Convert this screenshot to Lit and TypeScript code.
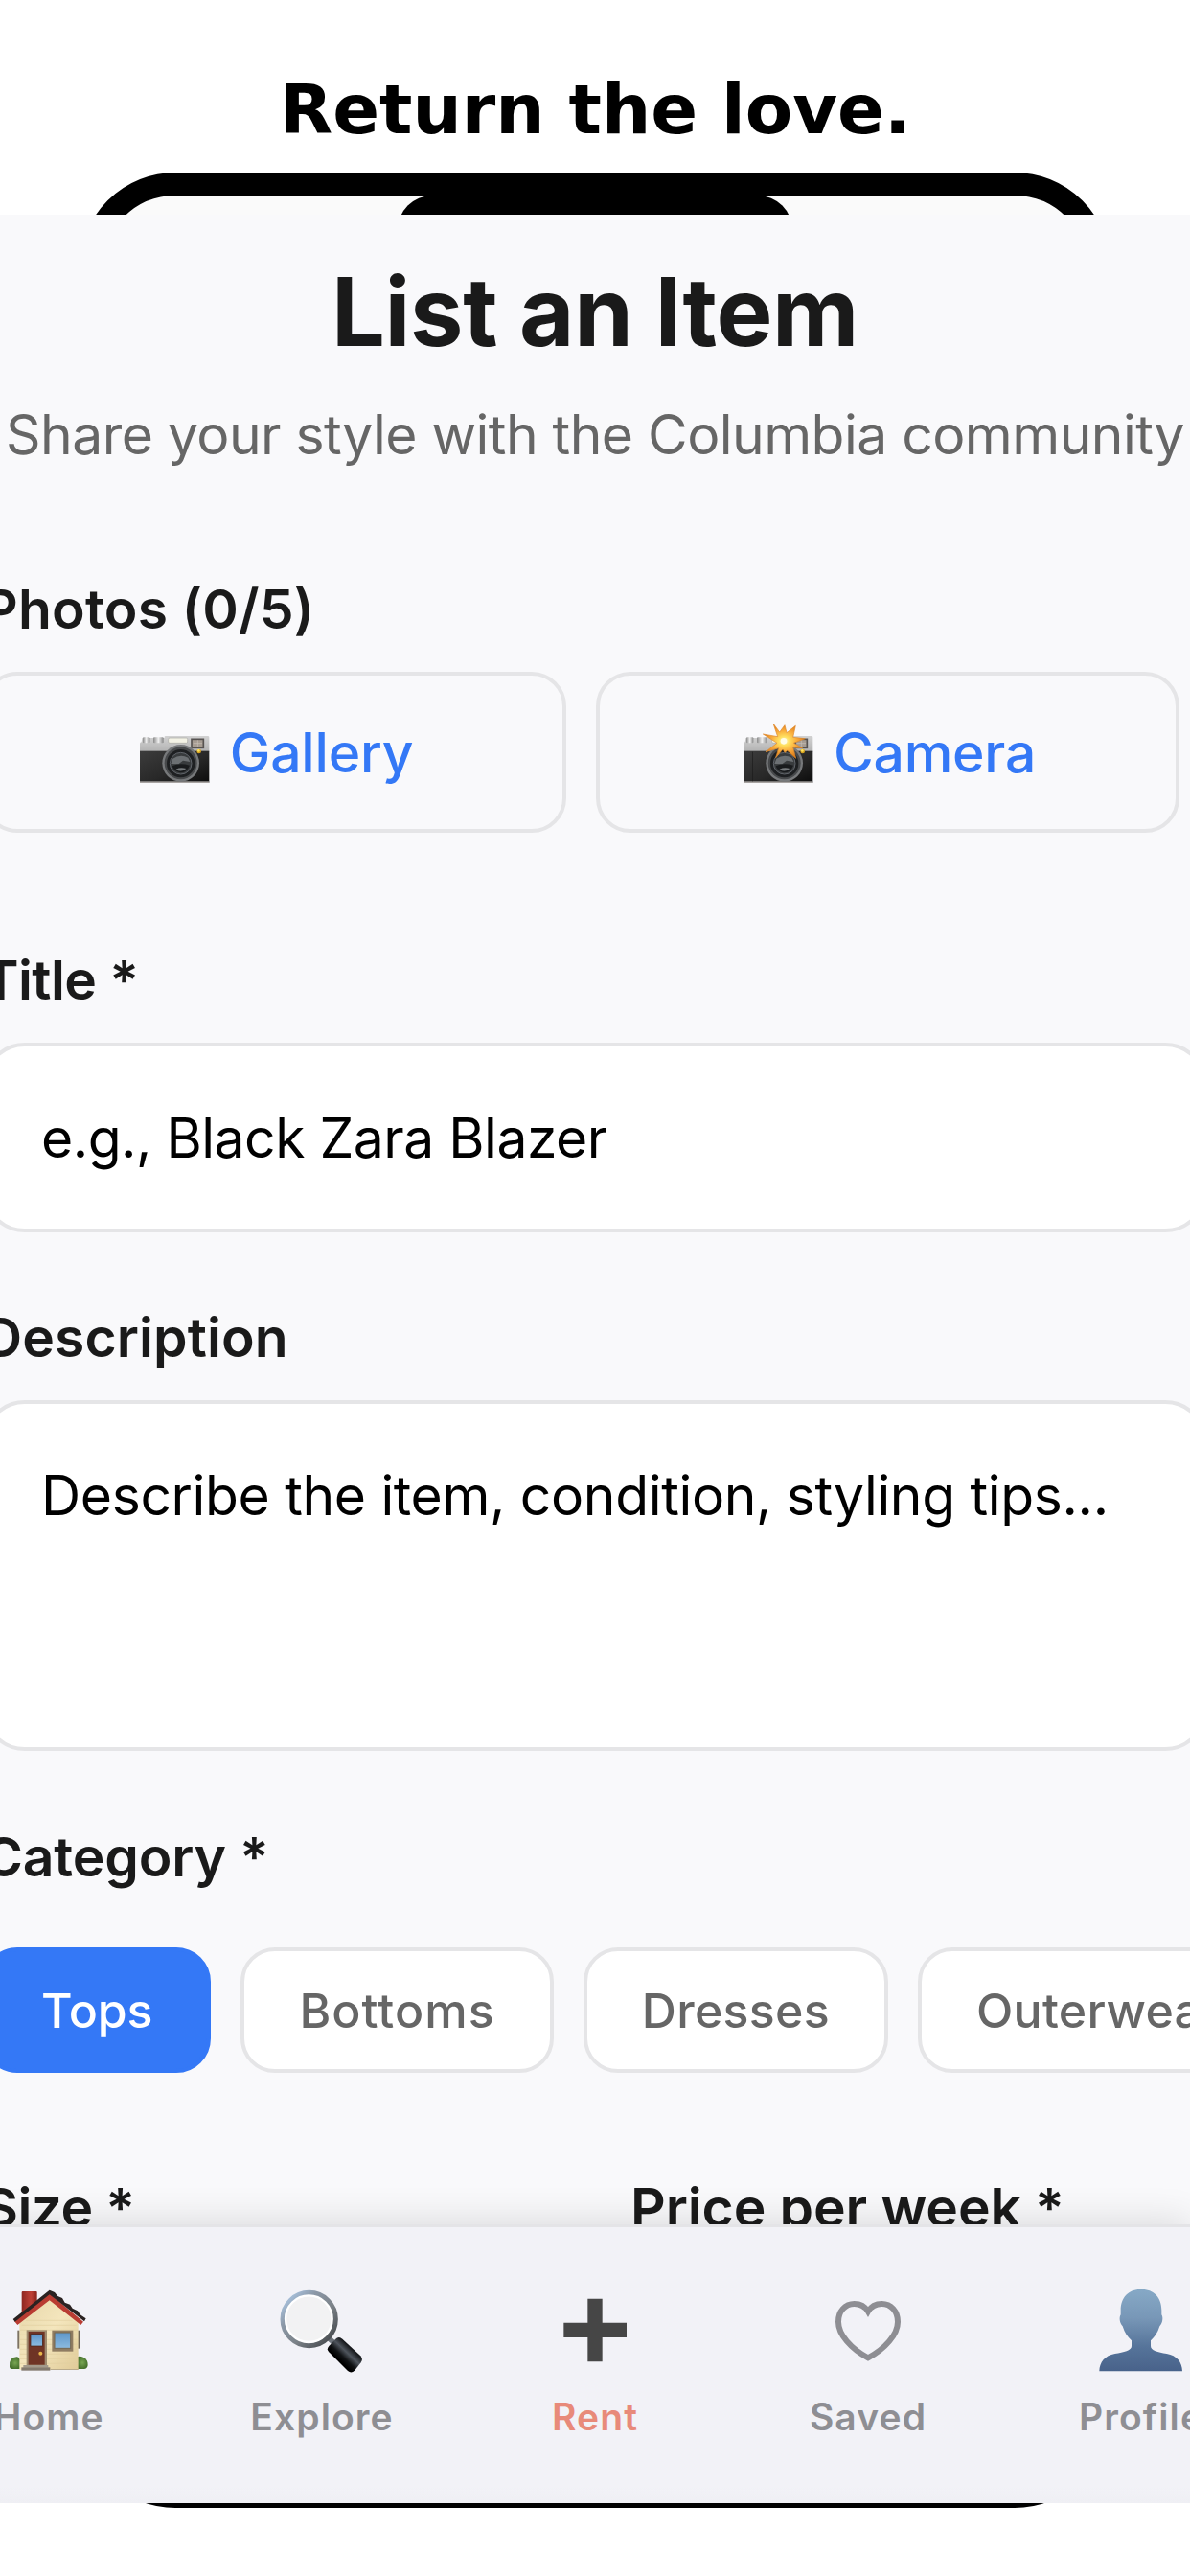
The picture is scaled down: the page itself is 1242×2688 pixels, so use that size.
import { html, css, svg, LitElement } from 'lit';
import { customElement, property, state } from 'lit/decorators.js';
import { classMap } from 'lit/directives/class-map.js';
import { styleMap } from 'lit/directives/style-map.js';

interface Option {
  label: string;
  tracking: number;
}

const CATEGORIES: Option[] = [
  { label: 'Tops', tracking: -0.1 },
  { label: 'Bottoms', tracking: 1.1 },
  { label: 'Dresses', tracking: 0.3 },
  { label: 'Outerwear', tracking: 0.3 },
];

const TABS = ['Home', 'Explore', 'Rent', 'Saved', 'Profile'];

@customElement('camera-icon')
export class CameraIcon extends LitElement {
  static styles = css`
    :host {
      display: block;
      width: 74px;
      height: 64px;
    }

    svg {
      display: block;
      width: 100%;
      height: 100%;
      overflow: visible;
    }
  `;

  @property({ type: Boolean }) flash = false;

  render() {
    return html`
      <svg viewBox="0 0 222 192">
        <defs>
          <linearGradient id="plate" x1="0" y1="0" x2="0" y2="1">
            <stop offset="0" stop-color="#d2d2d2" />
            <stop offset="1" stop-color="#b2b2b2" />
          </linearGradient>
          <linearGradient id="knob" x1="0" y1="0" x2="1" y2="0">
            <stop offset="0" stop-color="#8a8a8a" />
            <stop offset="0.5" stop-color="#f0f0f0" />
            <stop offset="1" stop-color="#858585" />
          </linearGradient>
          <linearGradient id="leather" x1="0" y1="0" x2="1" y2="1">
            <stop offset="0" stop-color="#3c3c3c" />
            <stop offset="0.55" stop-color="#282828" />
            <stop offset="1" stop-color="#0c0c0c" />
          </linearGradient>
          <radialGradient id="burst">
            <stop offset="0" stop-color="#fffbd0" />
            <stop offset="0.25" stop-color="#ffe060" />
            <stop offset="0.6" stop-color="#f9ac3c" />
            <stop offset="1" stop-color="#dd7c1c" />
          </radialGradient>
        </defs>
        <path d="M3 66Q3 62 8 61L10 48H80V44Q80 42 84 42H216Q220 42 220 46V92H3Z" fill="url(#plate)" />
        <rect x="12" y="46" width="22" height="18" rx="3" fill="url(#knob)" />
        <rect x="45" y="46" width="32" height="18" rx="3" fill="url(#knob)" />
        <rect x="3" y="89" width="217" height="99" fill="url(#leather)" />
        <rect x="3" y="184" width="217" height="5" fill="#a8a4a2" />
        <rect x="30" y="92" width="2" height="92" fill="#1c1c1c" />
        <rect x="92" y="48" width="60" height="16" rx="4" fill="#f4f3e6" stroke="#a9a9a4" stroke-width="2" />
        <rect x="165" y="52" width="37" height="27" fill="#a69c92" stroke="#575351" stroke-width="5" />
        <path d="M170 65H198M184 55V76" stroke="#c8c0b6" stroke-width="2" />
        <circle cx="131" cy="127" r="58" fill="#77797b" />
        <circle cx="131" cy="127" r="51" fill="#47494b" />
        <circle cx="131" cy="128" r="44" fill="#1e2022" />
        <circle cx="131" cy="128" r="34" fill="#383b3d" stroke="#60646a" stroke-width="3" />
        <path d="M106 113Q130 97 154 110L160 123L138 119L124 130L100 129Z" fill="#6c7073" />
        <path d="M104 136Q127 125 159 134Q150 157 128 157Q110 153 104 136Z" fill="#191b1d" />
        <path d="M116 146Q130 139 148 144Q132 158 116 146Z" fill="#777b7e" />
        <circle cx="188" cy="90" r="7" fill="#d8a520" />
        <circle cx="187" cy="88" r="4" fill="#ffe45c" />
        ${this.flash
          ? svg`<path d="M96 3L116 30L132 8L138 32L166 10L158 46L196 50L160 64L188 80L158 78L167 112L140 88L132 94L126 84L104 110L113 80L72 92L108 64L64 36L110 44Z" fill="url(#burst)" stroke="#df8a2b" stroke-width="2" stroke-linejoin="round" />
              <circle cx="129" cy="58" r="10" fill="#fffde8" />`
          : ''}
      </svg>
    `;
  }
}

@customElement('tab-icon')
export class TabIcon extends LitElement {
  static styles = css`
    :host {
      display: block;
      width: 88px;
      height: 88px;
    }

    svg {
      display: block;
      width: 100%;
      height: 100%;
    }
  `;

  @property() name = '';

  private house() {
    return svg`
      <defs>
        <linearGradient id="wall" x1="0" y1="0" x2="1" y2="1">
          <stop offset="0" stop-color="#e6d6a9" />
          <stop offset="0.5" stop-color="#f4e6bd" />
          <stop offset="1" stop-color="#e0cb98" />
        </linearGradient>
        <linearGradient id="glass" x1="0" y1="0" x2="0" y2="1">
          <stop offset="0" stop-color="#5d95c9" />
          <stop offset="1" stop-color="#8cbbe0" />
        </linearGradient>
        <radialGradient id="bush">
          <stop offset="0" stop-color="#79a653" />
          <stop offset="1" stop-color="#45702c" />
        </radialGradient>
        <linearGradient id="brick" x1="0" y1="0" x2="1" y2="0">
          <stop offset="0" stop-color="#8e2620" />
          <stop offset="0.6" stop-color="#bd4036" />
          <stop offset="1" stop-color="#8a241d" />
        </linearGradient>
      </defs>
      <rect x="47" y="9" width="48" height="74" rx="3" fill="url(#brick)" />
      <rect x="34" y="131" width="7" height="57" fill="#7d7363" />
      <rect x="222" y="131" width="8" height="57" fill="#6d6456" />
      <path d="M9 246Q6 214 32 214Q42 216 44 230V252H16Q10 252 9 246Z" fill="url(#bush)" />
      <path d="M220 252V214Q228 210 240 215Q255 222 254 240Q252 252 242 252Z" fill="url(#bush)" />
      <path d="M40 104L134 26L224 104V254H40Z" fill="url(#wall)" />
      <path d="M60 100H206M47 115H218M42 130H222M42 145H222M42 160H222M42 175H222M42 190H222M42 205H222M42 220H222M42 235H222" stroke="#e2d0a0" stroke-width="2" />
      <path d="M134 16L240 104L232 114L134 37L34 114L24 102Z" fill="#b93c32" />
      <path d="M134 5L150 12L160 24L174 30L182 44L198 50L206 62L222 70L230 82L248 94L243 103L134 19L26 104L20 96Z" fill="#2a2221" />
      <rect x="62" y="130" width="64" height="111" fill="#9f8b6f" />
      <rect x="68" y="135" width="51" height="104" fill="#6f3425" />
      <rect x="75" y="143" width="37" height="37" fill="url(#glass)" stroke="#432015" stroke-width="2" />
      <circle cx="106" cy="203" r="6" fill="#e9b74a" />
      <rect x="142" y="131" width="66" height="66" fill="#8f7c62" />
      <rect x="150" y="138" width="50" height="49" fill="url(#glass)" stroke="#75664f" stroke-width="3" />
      <rect x="52" y="240" width="78" height="8" fill="#a39a8c" />
      <rect x="46" y="247" width="90" height="10" fill="#837a6f" />
      <rect x="136" y="252" width="88" height="3" fill="#b9ab8c" />
    `;
  }

  private magnifier() {
    return svg`
      <defs>
        <linearGradient id="rim" x1="0" y1="0" x2="1" y2="1">
          <stop offset="0" stop-color="#b4d2f2" />
          <stop offset="0.3" stop-color="#8c99a8" />
          <stop offset="0.6" stop-color="#7b8187" />
          <stop offset="1" stop-color="#3b3f43" />
        </linearGradient>
        <linearGradient id="grip" gradientUnits="userSpaceOnUse" x1="222" y1="186" x2="186" y2="224">
          <stop offset="0" stop-color="#17191c" />
          <stop offset="0.35" stop-color="#4f555d" />
          <stop offset="0.7" stop-color="#111315" />
          <stop offset="1" stop-color="#000000" />
        </linearGradient>
      </defs>
      <path d="M150 152L176 176" stroke="#6d737a" stroke-width="16" />
      <circle cx="92" cy="96" r="82" fill="#f2f2f3" stroke="url(#rim)" stroke-width="17" />
      <circle cx="91" cy="95" r="73" fill="none" stroke="#ffffff" stroke-width="7" />
      <path d="M174 159Q185 148 196 158L253 211Q262 222 254 232L234 257Q224 267 213 258L154 199Q145 190 154 180Z" fill="url(#grip)" />
    `;
  }

  private plus() {
    return svg`<path d="M109 32H155V107H231V153H155V229H109V153H34V107H109Z" fill="#464646" />`;
  }

  private heart() {
    return svg`<path d="M132 72C122 55 107 48 89 48C60 48 39 72 39 104C39 144 78 188 132 217C186 188 225 144 225 104C225 72 204 48 175 48C157 48 142 55 132 72Z" fill="none" stroke="#8e8e93" stroke-width="18" />`;
  }

  private person() {
    return svg`
      <defs>
        <linearGradient id="bust" x1="0" y1="0" x2="0" y2="1">
          <stop offset="0" stop-color="#86a9c6" />
          <stop offset="0.35" stop-color="#7897b7" />
          <stop offset="0.7" stop-color="#56749a" />
          <stop offset="1" stop-color="#48628a" />
        </linearGradient>
      </defs>
      <path d="M132 2C92 2 68 28 68 68V82C62 90 65 110 74 118C80 138 90 152 102 163V180C102 194 78 200 50 204C18 210 2 230 1 259H261C260 230 244 210 212 204C184 200 162 194 162 180V163C174 152 184 138 190 118C199 110 202 90 196 82V68C196 28 172 2 132 2Z" fill="url(#bust)" />
    `;
  }

  private glyph() {
    switch (this.name) {
      case 'Home':
        return this.house();
      case 'Explore':
        return this.magnifier();
      case 'Rent':
        return this.plus();
      case 'Saved':
        return this.heart();
      default:
        return this.person();
    }
  }

  render() {
    return html`<svg viewBox="0 0 264 264">${this.glyph()}</svg>`;
  }
}

@customElement('app-root')
export class AppRoot extends LitElement {
  static styles = css`
    :host {
      display: block;
      width: 1242px;
      height: 2688px;
      overflow: hidden;
      background: #ffffff;
      font-family: Inter, 'Liberation Sans', sans-serif;
      color: #1a1a1a;
      white-space: nowrap;
    }

    .headline {
      height: 180px;
      box-sizing: border-box;
      padding-top: 71px;
      text-align: center;
      font: 700 72px/86px 'DejaVu Sans', sans-serif;
      color: #000000;
    }

    .stage {
      display: grid;
      grid-template: 2508px / 1242px;
    }

    .phone {
      grid-area: 1 / 1;
      justify-self: center;
      box-sizing: border-box;
      width: 1076px;
      height: 2437px;
      border: 24px solid #000000;
      border-radius: 100px;
      background: #fafafa;
    }

    .notch {
      width: 412px;
      height: 72px;
      margin: 0 auto;
      border-radius: 36px;
      background: #000000;
    }

    .screen {
      grid-area: 1 / 1;
      display: flex;
      flex-direction: column;
      height: 2388px;
      margin-top: 44px;
      overflow: hidden;
      background: #f9f9fb;
    }

    .content {
      flex: 1;
      min-height: 0;
      overflow: hidden;
      padding-top: 41px;
    }

    h1 {
      margin: 0;
      text-align: center;
      font-size: 99px;
      font-weight: 700;
      line-height: 120px;
      letter-spacing: -0.36px;
    }

    .subtitle {
      display: flex;
      justify-content: center;
      margin: 34px 0 112px;
      font-size: 57px;
      line-height: 70px;
      letter-spacing: -0.54px;
      color: #666666;
    }

    .form {
      width: 1278px;
      margin-left: -18px;
    }

    .label {
      margin-bottom: 30px;
      font-size: 57px;
      font-weight: 600;
      line-height: 70px;
      letter-spacing: 0.1px;
    }

    .label.photos {
      letter-spacing: 0.2px;
    }

    .label.starred {
      letter-spacing: -0.6px;
    }

    .label.category {
      margin-bottom: 59px;
      letter-spacing: -0.2px;
    }

    .label.price {
      letter-spacing: -0.1px;
    }

    .sources {
      display: flex;
      gap: 31px;
      margin-bottom: 119px;
    }

    .source {
      display: flex;
      align-items: center;
      justify-content: center;
      gap: 21px;
      box-sizing: border-box;
      width: 609px;
      height: 168px;
      padding: 2px 0 0 3px;
      border: 4px solid #e5e5e7;
      border-radius: 36px;
      font-size: 57px;
      font-weight: 500;
      line-height: 70px;
      letter-spacing: -0.2px;
      color: #3478f6;
    }

    .input {
      box-sizing: border-box;
      height: 198px;
      margin-bottom: 75px;
      padding: 61px 57px 0;
      border: 4px solid #e5e5e7;
      border-radius: 44px;
      background: #ffffff;
      font-size: 57px;
      line-height: 70px;
      letter-spacing: -0.5px;
      color: #000000;
    }

    .input.multiline {
      height: 366px;
      margin-bottom: 76px;
      letter-spacing: -0.35px;
    }

    .chips {
      display: flex;
      gap: 31px;
      margin-bottom: 106px;
    }

    .chip {
      flex: none;
      box-sizing: border-box;
      height: 131px;
      padding: 0 57px;
      border: 4px solid #e5e5e7;
      border-radius: 36px;
      background: #ffffff;
      font-size: 50px;
      font-weight: 500;
      line-height: 125px;
      color: #666666;
    }

    .chip.selected {
      border-color: #3478f6;
      background: #3478f6;
      color: #ffffff;
    }

    .columns {
      display: grid;
      grid-template-columns: 676px 1fr;
    }

    .tabs {
      position: relative;
      display: flex;
      justify-content: center;
      box-sizing: border-box;
      height: 291px;
      padding-top: 64px;
      border-top: 3px solid #e4e4e7;
      background: linear-gradient(#f2f2f7 270px, #efeff4);
      box-shadow: 0 -4px 36px rgba(0, 0, 0, 0.12);
    }

    .tab {
      flex: none;
      display: flex;
      flex-direction: column;
      align-items: center;
      gap: 22px;
      width: 285px;
      font-size: 39px;
      font-weight: 600;
      line-height: 48px;
      letter-spacing: 1.1px;
      color: #8e8e93;
    }

    .tab.active {
      color: #e88a7a;
    }
  `;

  @state() private category = 'Tops';

  @state() private tab = 'Rent';

  private chip(option: Option) {
    return html`
      <div
        class=${classMap({ chip: true, selected: option.label === this.category })}
        style=${styleMap({ letterSpacing: `${option.tracking}px` })}
        @click=${() => { this.category = option.label; }}
      >${option.label}</div>
    `;
  }

  private tabItem(name: string) {
    return html`
      <div
        class=${classMap({ tab: true, active: name === this.tab })}
        @click=${() => { this.tab = name; }}
      >
        <tab-icon name=${name}></tab-icon>
        <span>${name}</span>
      </div>
    `;
  }

  render() {
    return html`
      <div class="headline">Return the love.</div>
      <div class="stage">
        <div class="phone"><div class="notch"></div></div>
        <div class="screen">
          <div class="content">
            <h1>List an Item</h1>
            <div class="subtitle">Share your style with the Columbia community</div>
            <div class="form">
              <div class="label photos">Photos (0/5)</div>
              <div class="sources">
                <div class="source"><camera-icon></camera-icon><span>Gallery</span></div>
                <div class="source"><camera-icon flash></camera-icon><span>Camera</span></div>
              </div>
              <div class="label starred">Title *</div>
              <div class="input">e.g., Black Zara Blazer</div>
              <div class="label">Description</div>
              <div class="input multiline">Describe the item, condition, styling tips...</div>
              <div class="label category">Category *</div>
              <div class="chips">${CATEGORIES.map((c) => this.chip(c))}</div>
              <div class="columns">
                <div class="label starred">Size *</div>
                <div class="label price">Price per week *</div>
              </div>
            </div>
          </div>
          <div class="tabs">${TABS.map((t) => this.tabItem(t))}</div>
        </div>
      </div>
    `;
  }
}
